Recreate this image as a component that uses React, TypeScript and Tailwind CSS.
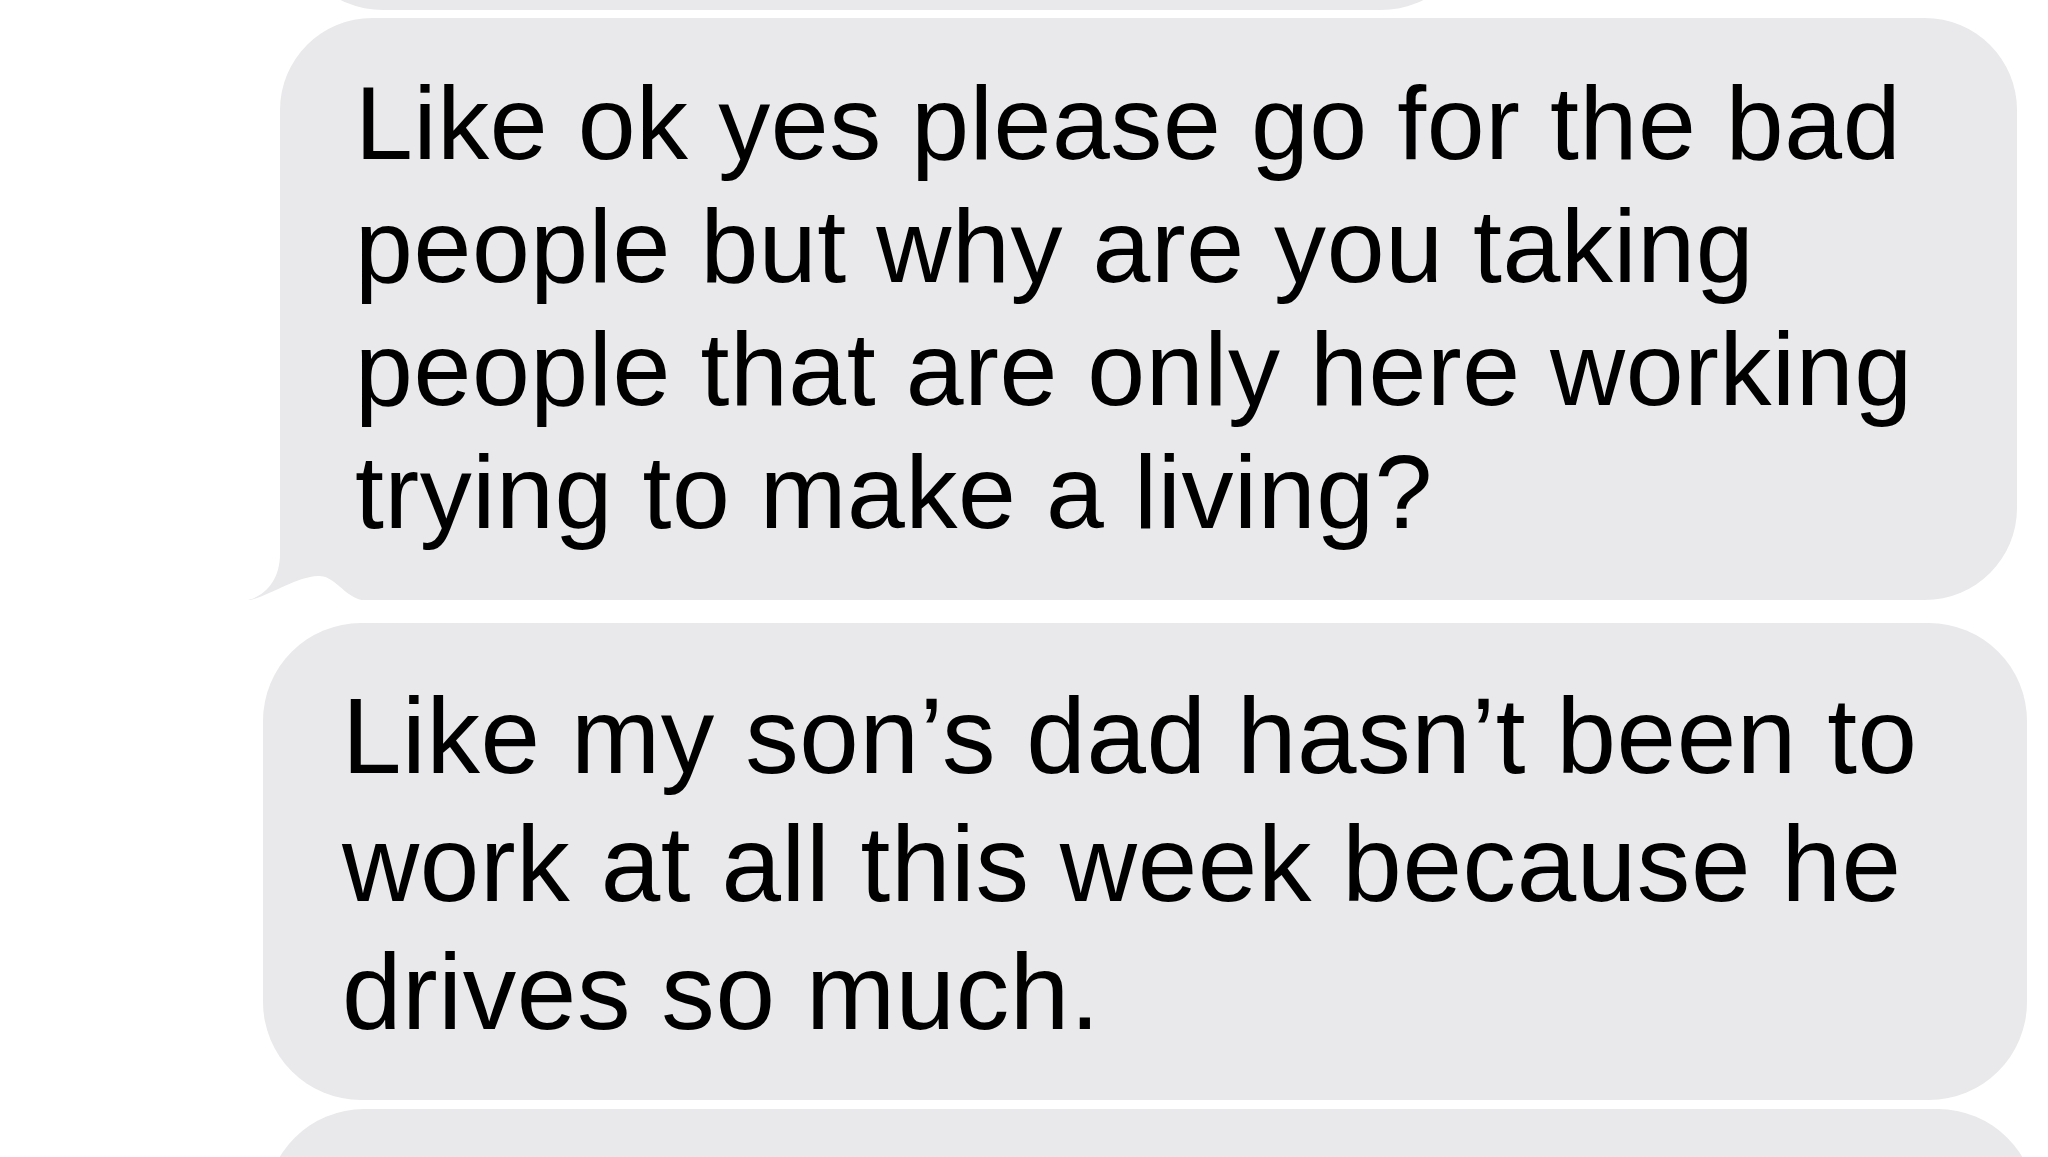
import React from "react";

const font = { fontFamily: '"Liberation Sans", Arial, sans-serif' };

function Lines({ lines }: { lines: string[] }) {
  return (
    <>
      {lines.map((l, i) => (
        <div key={i} className="whitespace-nowrap">
          {l}
        </div>
      ))}
    </>
  );
}

export default function App() {
  return (
    <div
      className="w-[2048px] h-[1157px] overflow-hidden bg-white flex flex-col text-black"
      style={font}
    >
      {/* previous bubble, mostly scrolled off */}
      <div className="ml-[288px] w-[1188px] h-[200px] -mt-[190px] shrink-0 rounded-[95px] bg-[#e9e9eb]" />

      {/* bubble 1 with tail */}
      <div className="relative ml-[280px] mt-[8px] w-[1737px] shrink-0 rounded-[92px] rounded-bl-none bg-[#e9e9eb] pl-[75px] pt-[44px] pb-[46px] text-[104px] leading-[123px] tracking-[0.6px]">
        <Lines
          lines={[
            "Like ok yes please go for the bad",
            "people but why are you taking",
            "people that are only here working",
            "trying to make a living?",
          ]}
        />
        <svg
          className="absolute left-[-40px] bottom-0"
          width="140"
          height="80"
          viewBox="0 0 140 80"
        >
          <path d="M40 20 L40 34 C40 60 25 76 8 80 L40 80 Z" fill="#e9e9eb" />
          <path
            d="M8 80.5 C30 76 55 57 78 56 C95 55 105 78 124 80.5 Z"
            fill="#ffffff"
          />
        </svg>
      </div>

      {/* bubble 2 */}
      <div className="ml-[263px] mt-[23px] w-[1764px] shrink-0 rounded-[98px] bg-[#e9e9eb] pl-[79px] pt-[49px] pb-[44px] text-[107px] leading-[128px] tracking-[0.6px]">
        <Lines
          lines={[
            "Like my son\u2019s dad hasn\u2019t been to",
            "work at all this week because he",
            "drives so much.",
          ]}
        />
      </div>

      {/* next bubble, cut off */}
      <div className="ml-[266px] mt-[9px] w-[1770px] h-[300px] shrink-0 rounded-[98px] bg-[#e9e9eb]" />
    </div>
  );
}
